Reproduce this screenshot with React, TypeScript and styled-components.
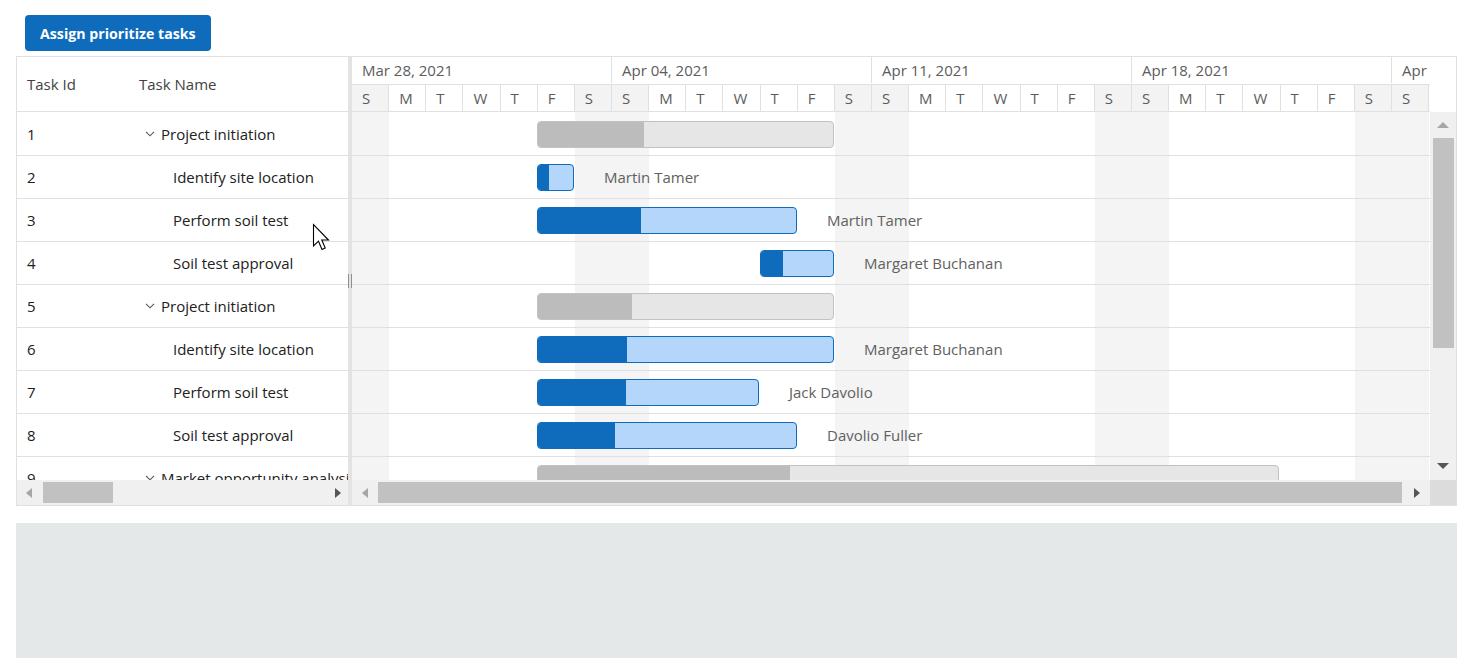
import React from 'react';
import styled, { createGlobalStyle } from 'styled-components';

const DAY = 260 / 7;
const FONT = '"Open Sans", "Noto Sans", Arial, sans-serif';

type Task = {
  id: number;
  name: string;
  parent?: boolean;
  start: number;
  days: number;
  progress: number;
  resource?: string;
};

const tasks: Task[] = [
  { id: 1, name: 'Project initiation', parent: true, start: 5, days: 8, progress: 36 },
  { id: 2, name: 'Identify site location', start: 5, days: 1, progress: 32, resource: 'Martin Tamer' },
  { id: 3, name: 'Perform soil test', start: 5, days: 7, progress: 40, resource: 'Martin Tamer' },
  { id: 4, name: 'Soil test approval', start: 11, days: 2, progress: 30, resource: 'Margaret Buchanan' },
  { id: 5, name: 'Project initiation', parent: true, start: 5, days: 8, progress: 32 },
  { id: 6, name: 'Identify site location', start: 5, days: 8, progress: 30, resource: 'Margaret Buchanan' },
  { id: 7, name: 'Perform soil test', start: 5, days: 6, progress: 40, resource: 'Jack Davolio' },
  { id: 8, name: 'Soil test approval', start: 5, days: 7, progress: 30, resource: 'Davolio Fuller' },
  { id: 9, name: 'Market opportunity analysis', parent: true, start: 5, days: 20, progress: 34 },
];

const weeks = ['Mar 28, 2021', 'Apr 04, 2021', 'Apr 11, 2021', 'Apr 18, 2021', 'Apr 25, 2021'];
const dayLetters = ['S', 'M', 'T', 'W', 'T', 'F', 'S'];
const days = Array.from({ length: 29 }, (_, i) => ({ letter: dayLetters[i % 7], weekend: i % 7 === 0 || i % 7 === 6 }));

const GlobalStyle = createGlobalStyle`
  html, body { margin: 0; padding: 0; background: #ffffff; }
  body { font-family: ${FONT}; color: #212121; }
  * { box-sizing: border-box; }
`;

const Page = styled.div`
  position: relative;
  width: 1478px;
  height: 672px;
  padding: 15px 21px 0 16px;
  overflow: hidden;
`;

const Toolbar = styled.div`
  display: flex;
  padding-left: 9px;
  margin-bottom: 5px;
`;

const PrimaryButton = styled.button`
  height: 36px;
  padding: 0 15px;
  border: none;
  border-radius: 4px;
  background: #0f6cbd;
  color: #ffffff;
  font-family: ${FONT};
  font-size: 14.2px;
  font-weight: 700;
  cursor: pointer;
`;

const Gantt = styled.div`
  display: grid;
  grid-template-columns: 331px 4px 1104px;
  height: 450px;
  border: 1px solid #e0e0e0;
  background: #ffffff;
`;

const GridPane = styled.div`
  display: grid;
  grid-template-rows: 55px 368px 25px;
  min-width: 0;
`;

const GridHeader = styled.div`
  display: grid;
  grid-template-columns: 112px 1fr;
  align-items: center;
  border-bottom: 1px solid #e0e0e0;
  font-size: 15px;
  color: #424242;
`;

const HeaderCell = styled.div`
  padding-left: 10px;
`;

const GridBody = styled.div`
  overflow: hidden;
  padding-top: 1px;
`;

const GridRow = styled.div`
  display: grid;
  grid-template-columns: 112px 1fr;
  align-items: center;
  height: 43px;
  border-bottom: 1px solid #e0e0e0;
  font-size: 15px;
  color: #212121;
`;

const IdCell = styled.div`
  padding-left: 10px;
`;

const NameCell = styled.div<{ $child?: boolean }>`
  display: flex;
  align-items: center;
  padding-left: ${(p) => (p.$child ? '44px' : '10px')};
  white-space: nowrap;
  overflow: hidden;
`;

const Expander = styled.span`
  display: inline-flex;
  align-items: center;
  justify-content: center;
  width: 22px;
  height: 16px;
  flex: 0 0 22px;
`;

const Splitter = styled.div`
  background: #e3e3e3;
  display: flex;
  align-items: center;
  justify-content: center;
`;

const Grip = styled.div`
  width: 4px;
  height: 14px;
  border-left: 1px solid #8f8f8f;
  border-right: 1px solid #8f8f8f;
`;

const ChartPane = styled.div`
  display: grid;
  grid-template-columns: 1078px 26px;
  grid-template-rows: 55px 368px 25px;
  min-width: 0;
`;

const TimelineHeader = styled.div`
  display: flex;
  flex-direction: column;
  border-bottom: 1px solid #e0e0e0;
  overflow: hidden;
  font-size: 15px;
  color: #5c5c5c;
`;

const TopTier = styled.div`
  display: flex;
  height: 28px;
  padding-bottom: 1px;
  border-bottom: 1px solid #e0e0e0;
`;

const WeekCell = styled.div`
  flex: 0 0 260px;
  display: flex;
  align-items: center;
  padding-left: 10px;
  border-right: 1px solid #e0e0e0;
  white-space: nowrap;
  overflow: hidden;
`;

const BottomTier = styled.div`
  display: flex;
  height: 26px;
`;

const DayCell = styled.div<{ $weekend: boolean }>`
  flex: 0 0 ${DAY}px;
  display: flex;
  align-items: center;
  padding-left: 10px;
  border-right: 1px solid #e0e0e0;
  background: ${(p) => (p.$weekend ? '#f3f3f3' : '#ffffff')};
`;

const HeaderCorner = styled.div`
  background: #ffffff;
`;

const ChartBody = styled.div`
  overflow: hidden;
  padding-top: 1px;
  background: repeating-linear-gradient(
    90deg,
    #f4f4f4 0,
    #f4f4f4 ${DAY}px,
    #ffffff ${DAY}px,
    #ffffff ${DAY * 6}px,
    #f4f4f4 ${DAY * 6}px,
    #f4f4f4 ${DAY * 7}px
  );
`;

const ChartRow = styled.div`
  display: flex;
  align-items: center;
  height: 43px;
  border-bottom: 1px solid #e0e0e0;
`;

const Bar = styled.div<{ $parent?: boolean }>`
  display: flex;
  height: 27px;
  flex: 0 0 auto;
  border-radius: 4px;
  overflow: hidden;
  border: 1px solid ${(p) => (p.$parent ? '#c2c2c2' : '#0f6cbd')};
  background: ${(p) => (p.$parent ? '#e6e6e6' : '#b4d6fa')};
`;

const Progress = styled.div<{ $parent?: boolean }>`
  height: 100%;
  background: ${(p) => (p.$parent ? '#bcbcbc' : '#0f6cbd')};
`;

const ResourceLabel = styled.span`
  margin-left: 30px;
  font-size: 15px;
  color: #616161;
  white-space: nowrap;
`;

const VScroll = styled.div`
  display: flex;
  flex-direction: column;
  align-items: center;
  background: #f0f0f0;
  padding: 10px 0 11px;
`;

const VThumb = styled.div`
  width: 21px;
  height: 210px;
  margin-top: 10px;
  background: #c1c1c1;
`;

const Spacer = styled.div`
  flex: 1;
`;

const ArrowUp = styled.div<{ $dark?: boolean }>`
  width: 0;
  height: 0;
  border-left: 6px solid transparent;
  border-right: 6px solid transparent;
  border-bottom: 6px solid ${(p) => (p.$dark ? '#555555' : '#a6a6a6')};
`;

const ArrowDown = styled.div<{ $dark?: boolean }>`
  width: 0;
  height: 0;
  border-left: 6px solid transparent;
  border-right: 6px solid transparent;
  border-top: 6px solid ${(p) => (p.$dark ? '#555555' : '#a6a6a6')};
`;

const ArrowLeft = styled.div<{ $dark?: boolean }>`
  width: 0;
  height: 0;
  border-top: 5px solid transparent;
  border-bottom: 5px solid transparent;
  border-right: 6px solid ${(p) => (p.$dark ? '#555555' : '#a6a6a6')};
`;

const ArrowRight = styled.div<{ $dark?: boolean }>`
  width: 0;
  height: 0;
  border-top: 5px solid transparent;
  border-bottom: 5px solid transparent;
  border-left: 6px solid ${(p) => (p.$dark ? '#555555' : '#a6a6a6')};
`;

const HScroll = styled.div<{ $left: number; $right: number }>`
  display: flex;
  align-items: center;
  background: #f0f0f0;
  padding: 0 ${(p) => p.$right}px 0 ${(p) => p.$left}px;
`;

const HThumb = styled.div<{ $width: number; $gap: number }>`
  width: ${(p) => p.$width}px;
  height: 21px;
  margin-left: ${(p) => p.$gap}px;
  background: #c1c1c1;
`;

const ScrollCorner = styled.div`
  background: #dcdcdc;
`;

const BottomPanel = styled.div`
  margin-top: 17px;
  height: 135px;
  background: #e5e8e9;
`;

const Cursor = styled.svg`
  position: absolute;
  left: 312px;
  top: 223px;
  pointer-events: none;
`;

const Chevron = () => (
  <svg width="10" height="6" viewBox="0 0 10 6">
    <path d="M1 0.8 L5 4.8 L9 0.8" fill="none" stroke="#555555" strokeWidth="1.1" />
  </svg>
);

export default function App() {
  return (
    <>
      <GlobalStyle />
      <Page>
        <Toolbar>
          <PrimaryButton>Assign prioritize tasks</PrimaryButton>
        </Toolbar>
        <Gantt>
          <GridPane>
            <GridHeader>
              <HeaderCell>Task Id</HeaderCell>
              <HeaderCell>Task Name</HeaderCell>
            </GridHeader>
            <GridBody>
              {tasks.map((t) => (
                <GridRow key={t.id}>
                  <IdCell>{t.id}</IdCell>
                  <NameCell $child={!t.parent}>
                    {t.parent && (
                      <Expander>
                        <Chevron />
                      </Expander>
                    )}
                    {t.name}
                  </NameCell>
                </GridRow>
              ))}
            </GridBody>
            <HScroll $left={9} $right={7}>
              <ArrowLeft />
              <HThumb $width={70} $gap={11} />
              <Spacer />
              <ArrowRight $dark />
            </HScroll>
          </GridPane>
          <Splitter>
            <Grip />
          </Splitter>
          <ChartPane>
            <TimelineHeader>
              <TopTier>
                {weeks.map((w) => (
                  <WeekCell key={w}>{w}</WeekCell>
                ))}
              </TopTier>
              <BottomTier>
                {days.map((d, i) => (
                  <DayCell key={i} $weekend={d.weekend}>
                    {d.letter}
                  </DayCell>
                ))}
              </BottomTier>
            </TimelineHeader>
            <HeaderCorner />
            <ChartBody>
              {tasks.map((t) => (
                <ChartRow key={t.id}>
                  <Bar
                    $parent={t.parent}
                    style={{ marginLeft: Math.floor(t.start * DAY), width: Math.floor(t.days * DAY) }}
                  >
                    <Progress $parent={t.parent} style={{ width: `${t.progress}%` }} />
                  </Bar>
                  {t.resource && <ResourceLabel>{t.resource}</ResourceLabel>}
                </ChartRow>
              ))}
            </ChartBody>
            <VScroll>
              <ArrowUp />
              <VThumb />
              <Spacer />
              <ArrowDown $dark />
            </VScroll>
            <HScroll $left={10} $right={10}>
              <ArrowLeft />
              <HThumb $width={1024} $gap={10} />
              <Spacer />
              <ArrowRight $dark />
            </HScroll>
            <ScrollCorner />
          </ChartPane>
        </Gantt>
        <BottomPanel />
        <Cursor width="20" height="30" viewBox="0 0 20 30">
          <path
            d="M1.5 1.5 L1.5 23 L6.5 18.2 L10 26.5 L13.2 25 L9.8 17 L16.5 17 Z"
            fill="#ffffff"
            stroke="#000000"
            strokeWidth="1.1"
            strokeLinejoin="miter"
          />
        </Cursor>
      </Page>
    </>
  );
}
